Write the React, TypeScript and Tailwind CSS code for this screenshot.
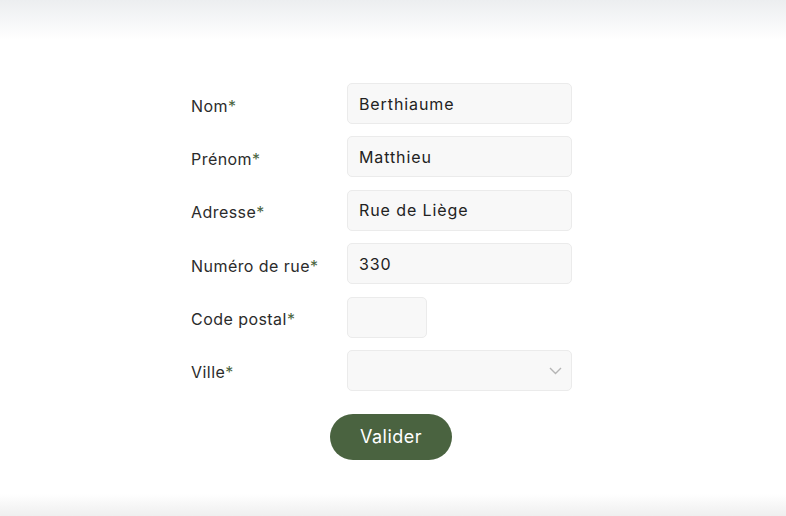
const fields = [
  { label: "Nom", value: "Berthiaume", width: "w-[225px]" },
  { label: "Prénom", value: "Matthieu", width: "w-[225px]" },
  { label: "Adresse", value: "Rue de Liège", width: "w-[225px]" },
  { label: "Numéro de rue", value: "330", width: "w-[225px]" },
  { label: "Code postal", value: "", width: "w-[80px]" },
];

const Label = ({ text }: { text: string }) => (
  <label className="pt-[4px] text-[16px] tracking-[0.45px] text-[#2b2b2b]">
    {text}
    <span className="text-[#4b6541]">*</span>
  </label>
);

const App = (): JSX.Element => (
  <div
    className="flex flex-col h-[516px] w-full bg-white overflow-hidden"
    style={{ fontFamily: "Inter, 'Open Sans', sans-serif" }}
  >
    <div className="h-[40px] shrink-0 bg-gradient-to-b from-[#eceef0] to-white" />
    <div className="flex-1 pt-[43px]">
      <div className="pl-[191px] grid grid-cols-[156px_auto] gap-y-[12.4px] items-center w-fit">
        {fields.map((f) => (
          <>
            <Label key={f.label + "l"} text={f.label} />
            <input
              key={f.label}
              defaultValue={f.value}
              className={
                "h-[41px] rounded-[5px] border border-[#ebebeb] bg-[#f8f8f8] px-[11px] text-[16px] tracking-[0.9px] text-[#222] outline-none " +
                f.width
              }
            />
          </>
        ))}
        <Label text="Ville" />
        <div className="relative w-[225px] h-[41px] rounded-[5px] border border-[#ebebeb] bg-[#f8f8f8]">
          <svg
            className="absolute right-[9px] top-[15px] h-[9px] w-[13px] text-[#b5b5b5]"
            viewBox="0 0 13 9"
            fill="none"
            stroke="currentColor"
            strokeWidth="1.4"
          >
            <path d="M1 2l5.5 5.5L12 2" />
          </svg>
        </div>
      </div>
      <div className="flex justify-center mt-[23px] mr-[4px]">
        <button className="h-[46px] w-[122px] rounded-full bg-[#4a6340] text-white text-[18px] tracking-[0.5px]">
          Valider
        </button>
      </div>
    </div>
    <div className="h-[22px] shrink-0 bg-gradient-to-b from-white to-[#efefef]" />
  </div>
);

export default App;
